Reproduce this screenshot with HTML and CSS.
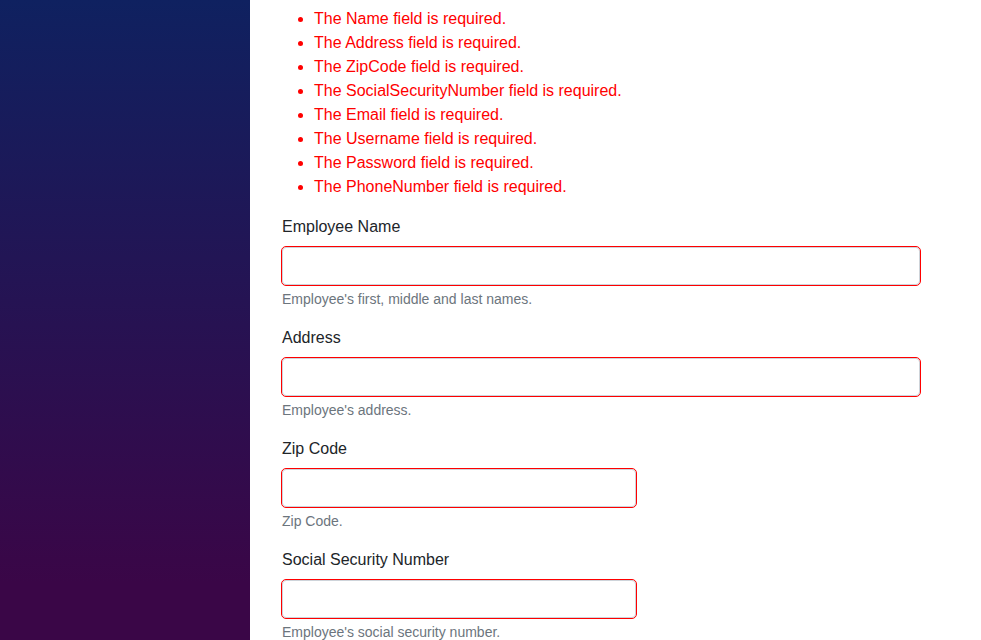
FILE: index.html
```html
<!DOCTYPE html>
<html lang="en">
<head>
<meta charset="utf-8">
<title>Employee</title>
<link rel="stylesheet" href="styles.css">
</head>
<body>
<div class="page">
  <div class="sidebar"></div>
  <main class="main">
    <div class="content">
      <ul class="validation-errors">
        <li>The Name field is required.</li>
        <li>The Address field is required.</li>
        <li>The ZipCode field is required.</li>
        <li>The SocialSecurityNumber field is required.</li>
        <li>The Email field is required.</li>
        <li>The Username field is required.</li>
        <li>The Password field is required.</li>
        <li>The PhoneNumber field is required.</li>
      </ul>
      <div class="field">
        <label class="form-label" for="name">Employee Name</label>
        <input class="form-control invalid wide" id="name" type="text">
        <div class="form-text">Employee's first, middle and last names.</div>
      </div>
      <div class="field">
        <label class="form-label" for="address">Address</label>
        <input class="form-control invalid wide" id="address" type="text">
        <div class="form-text">Employee's address.</div>
      </div>
      <div class="field">
        <label class="form-label" for="zip">Zip Code</label>
        <input class="form-control invalid narrow" id="zip" type="text">
        <div class="form-text">Zip Code.</div>
      </div>
      <div class="field">
        <label class="form-label" for="ssn">Social Security Number</label>
        <input class="form-control invalid narrow" id="ssn" type="text">
        <div class="form-text">Employee's social security number.</div>
      </div>
    </div>
  </main>
</div>
</body>
</html>
```
FILE: styles.css
```css
html, body {
  margin: 0;
  padding: 0;
  height: 100%;
  overflow: hidden;
  font-family: "Liberation Sans", Arial, Helvetica, sans-serif;
  font-size: 16px;
  line-height: 1.5;
  color: #212529;
  background: #fff;
}

.page {
  display: flex;
  height: 640px;
}

.sidebar {
  width: 250px;
  flex: 0 0 250px;
  height: 100%;
  background-image: linear-gradient(180deg, #0f2160 0%, #3a0647 91%);
}

.main {
  flex: 1;
  min-width: 0;
}

.content {
  padding: 7px 24px 0 32px;
}

.validation-errors {
  margin: 0 0 16px 0;
  padding-left: 32px;
  color: red;
}

.validation-errors li {
  line-height: 24px;
}

.field {
  margin-bottom: 16px;
}

.form-label {
  display: block;
  margin-bottom: 8px;
  line-height: 24px;
}

.form-control {
  display: block;
  box-sizing: border-box;
  height: 38px;
  padding: 6px 12px;
  font-family: inherit;
  font-size: 16px;
  line-height: 1.5;
  color: #212529;
  background: #fff;
  border: 1px solid #ced4da;
  border-radius: 4px;
  margin: 0;
}

.form-control.invalid {
  outline: 1px solid red;
}

.wide {
  width: 638px;
}

.narrow {
  width: 354px;
}

.form-text {
  margin-top: 4px;
  font-size: 14px;
  line-height: 21px;
  color: #6c757d;
}
```
